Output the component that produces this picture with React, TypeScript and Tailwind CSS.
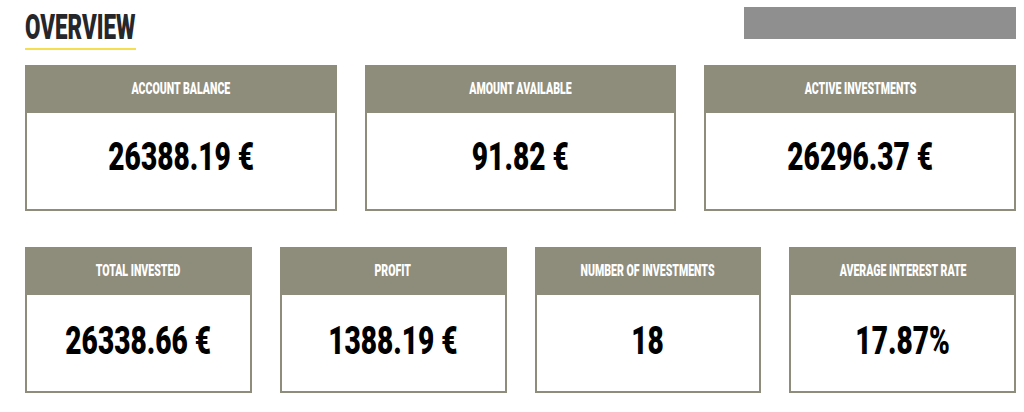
import React from "react";

const font = { fontFamily: 'Roboto, "Liberation Sans", sans-serif' };

function Card({ label, value, pad }: { label: string; value: string; pad: "a" | "b" }) {
  return (
    <div className="flex h-[146px] flex-col border-2 border-[#8e8c7b] bg-white">
      <div className="flex h-[46px] items-center justify-center bg-[#8e8c7b] pb-[3px] text-[16px] font-black uppercase leading-none text-white">
        <span className="inline-block scale-x-[0.66] whitespace-nowrap">{label}</span>
      </div>
      <div
        className={
          "flex flex-1 items-start justify-center text-[39px] font-black leading-none text-black " +
          (pad === "a" ? "pt-[25px]" : "pt-[27px]")
        }
      >
        <span className="inline-block scale-x-[0.72] whitespace-nowrap">{value}</span>
      </div>
    </div>
  );
}

export default function App() {
  return (
    <div className="h-[412px] w-[1024px] bg-white pl-[25px] pr-[8px] pt-[7px]" style={font}>
      <div className="flex items-start justify-between">
        <div className="mt-[3px]">
          <div className="text-[35px] font-black leading-none text-[#25272a]">
            <span className="inline-block origin-left scale-x-[0.64] whitespace-nowrap">OVERVIEW</span>
          </div>
          <div className="mt-[3px] h-[2px] w-[111px] bg-[#f3df4f]" />
        </div>
        <div className="h-[32px] w-[272px] bg-[#8f8f8f]" />
      </div>
      <div className="mt-[15px] grid grid-cols-3 gap-[28px]">
        <Card pad="a" label="Account Balance" value="26388.19 €" />
        <Card pad="a" label="Amount Available" value="91.82 €" />
        <Card pad="a" label="Active Investments" value="26296.37 €" />
      </div>
      <div className="mt-[36px] grid grid-cols-4 gap-[28px]">
        <Card pad="b" label="Total Invested" value="26338.66 €" />
        <Card pad="b" label="Profit" value="1388.19 €" />
        <Card pad="b" label="Number of Investments" value="18" />
        <Card pad="b" label="Average Interest Rate" value="17.87%" />
      </div>
    </div>
  );
}
